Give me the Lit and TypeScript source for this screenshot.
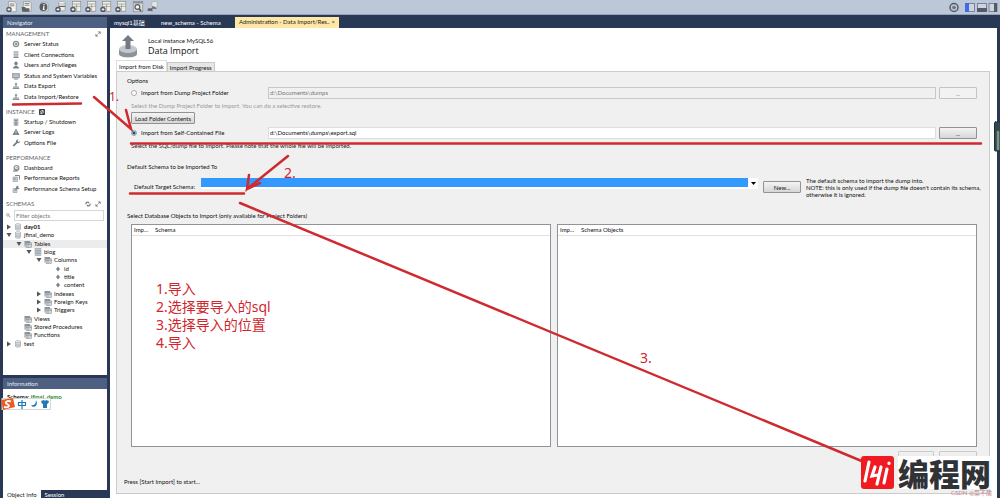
import { LitElement, html, css, svg, nothing } from "lit";
import { customElement } from "lit/decorators.js";

const icons: Record<string, unknown> = {
  status: svg`<circle cx="8" cy="8" r="6.5" fill="#8d9298"/><circle cx="8" cy="8" r="4" fill="#e4e6e8"/><path d="M7 5.5l4 2.5-4 2.5z" fill="#555b62"/>`,
  client: svg`<rect x="4" y="1" width="8" height="9" fill="#d5d8db" stroke="#8a8f95"/><path d="M5 4h6M5 7h6" stroke="#8a8f95"/><path d="M2 14l2-3h8l2 3z" fill="#8a8f95"/>`,
  user: svg`<ellipse cx="8" cy="5" rx="3.4" ry="4" fill="#7b8087"/><path d="M2 15c0-4 3-4 4-5h4c1 1 4 1 4 5z" fill="#7b8087"/>`,
  monitor: svg`<rect x="1" y="3" width="14" height="9" fill="#a4abb2" stroke="#7f858b"/><path d="M3 6h10M3 9h10" stroke="#e2e4e6"/><path d="M4 14h8" stroke="#7f858b" stroke-width="2"/>`,
  transfer: svg`<path d="M8 1l3 4H9v5H7V5H5z" fill="#7a8086"/><path d="M3 9h10l2 5H1z" fill="#8d9298"/><path d="M3 11h10" stroke="#d8dadc"/>`,
  power: svg`<rect x="4" y="2" width="8" height="13" fill="#c9cdd1" stroke="#7f858b"/><path d="M6 5h4M6 8h4" stroke="#6b7178" stroke-width="1.5"/><rect x="6" y="10" width="4" height="3" fill="#7f858b"/>`,
  logs: svg`<path d="M8 1l7 13H1z" fill="#777d84"/><path d="M8 5v5M8 11v2" stroke="#eee" stroke-width="1.5"/>`,
  wrench: svg`<path d="M1 13l7-7c-1-3 2-6 5-5l-2 3 2 2 3-2c0 4-3 5-5 4l-7 7z" fill="#777d84"/>`,
  gauge: svg`<circle cx="9" cy="8" r="6" fill="#8b9197"/><circle cx="9" cy="7" r="3.5" fill="#e1e3e5"/><path d="M9 8l2-3" stroke="#555"/><path d="M2 14h9" stroke="#777" stroke-width="2"/>`,
  report: svg`<path d="M2 6h9v9H2z" fill="#d0d3d6" stroke="#80868c"/><path d="M4 12V9M6 12V7M8 12V9" stroke="#70767c"/><path d="M6 3h9v8" fill="none" stroke="#80868c" stroke-width="2"/>`,
  setup: svg`<path d="M2 7h8v8H2z" fill="#d0d3d6" stroke="#80868c"/><path d="M4 13l4-8c0-3 3-4 5-3l-1 3 3 1c0 2-2 3-4 2" fill="#80868c"/>`,
  db: svg`<path d="M3 3v10c0 2 10 2 10 0V3z" fill="#dcdfe1" stroke="#90959a"/><ellipse cx="8" cy="3" rx="5" ry="1.8" fill="#f3f4f5" stroke="#90959a"/><path d="M3 7c0 2 10 2 10 0M3 10c0 2 10 2 10 0" fill="none" stroke="#90959a"/>`,
  folder: svg`<path d="M1 2h11v3h3v2H3v6H1z" fill="#8d959c"/><rect x="4" y="6" width="11" height="9" fill="#cfd5da" stroke="#7f868c"/><path d="M4 9h11M8 6v9" stroke="#7f868c"/>`,
  table: svg`<rect x="2" y="1" width="12" height="14" fill="#cdd6dd" stroke="#8b949b"/><path d="M2 5h12M2 8h12M2 11h12M6 1v14M10 1v14" stroke="#8b949b"/>`,
  column: svg`<path d="M8 3l4 5-4 5-4-5z" fill="#7d8489"/>`,
  search: svg`<circle cx="6" cy="6" r="4" fill="none" stroke="#777" stroke-width="2"/><path d="M9 9l5 5" stroke="#777" stroke-width="2"/>`,
  expand: svg`<path d="M9 2h5v5zM2 9v5h5zM12 4L4 12" stroke="#777" stroke-width="1.5" fill="#777"/>`,
  refresh: svg`<path d="M3 9a4 4 0 0 1 6-5M13 7a4 4 0 0 1-6 5" fill="none" stroke="#777" stroke-width="3"/><path d="M8 1l4 3-4 3zM8 9l-4 3 4 3z" fill="#777"/>`,
  badge: svg`<rect width="16" height="16" rx="2" fill="#3c4147"/><path d="M4 9a4 4 0 0 1 6-4M12 7a4 4 0 0 1-6 4" fill="none" stroke="#fff" stroke-width="2"/><path d="M9 2l4 3-4 3zM7 8l-4 3 4 3z" fill="#fff"/>`,
  sheetSql: svg`<path d="M4 1h10l3 3v14H4z" fill="#f3f2ee" stroke="#85847f"/><path d="M6 5h8M6 8h8" stroke="#777" stroke-width="1.5"/><circle cx="5" cy="14" r="4.5" fill="#555b5f"/><path d="M5 11.5v5M2.5 14h5" stroke="#fff" stroke-width="1.5"/>`,
  openSql: svg`<path d="M4 1h11l2 3v13H4z" fill="#f3f2ee" stroke="#85847f"/><path d="M6 4h8M6 7h8" stroke="#777" stroke-width="1.5"/><path d="M1 10h6l1 2h6v6H2z" fill="#5e6263"/>`,
  info: svg`<path d="M5 2h9l3 3v12H5z" fill="#d9dbdc" stroke="#94999d"/><circle cx="9" cy="10" r="6.5" fill="#555b5f"/><path d="M10 5v2M10 8l-1 6h2" stroke="#fff" stroke-width="2" fill="none"/>`,
  addDb: svg`<path d="M6 3v12c0 2 11 2 11 0V3z" fill="#e9e9e6" stroke="#86898b"/><ellipse cx="11.5" cy="3" rx="5.5" ry="2" fill="#fff" stroke="#86898b"/><path d="M6 9h11" stroke="#666" stroke-width="2"/><circle cx="5" cy="14" r="4.5" fill="#4c5256"/><path d="M5 11.5v5M2.5 14h5" stroke="#fff" stroke-width="1.5"/>`,
  addTable: svg`<rect x="4" y="1" width="14" height="16" fill="#f0efe9" stroke="#85847f"/><path d="M4 5h14M4 9h14M11 5v12" stroke="#85847f"/><circle cx="5" cy="14" r="4.5" fill="#4c5256"/><path d="M5 11.5v5M2.5 14h5" stroke="#fff" stroke-width="1.5"/>`,
  find: svg`<rect x="2" y="1" width="16" height="17" fill="#dedfdd" stroke="#777b7d"/><path d="M3 3h14" stroke="#777b7d" stroke-width="2"/><circle cx="9" cy="10" r="4" fill="#f4f4f4" stroke="#555b5f" stroke-width="2"/><path d="M12 13l3 4" stroke="#555b5f" stroke-width="3"/>`,
  link: svg`<path d="M8 1h9v9H8z" fill="#e6e7e5" stroke="#a0a4a7"/><path d="M1 12h8v-4l8 5H9v5z" fill="#5f6569"/><path d="M1 15h6" stroke="#5f6569" stroke-width="3"/>`,
};

const icon = (name: string, size = 16) =>
  html`<svg class="icon" viewBox="0 0 ${size} ${size}" aria-hidden="true">${icons[name]}</svg>`;

const sections = [
  { title: "MANAGEMENT", mark: "", tail: ["expand"], cls: "six", items: [
    ["status", "Server Status"], ["client", "Client Connections"], ["user", "Users and Privileges"],
    ["monitor", "Status and System Variables"], ["transfer", "Data Export"], ["transfer", "Data Import/Restore"]] },
  { title: "INSTANCE", mark: "badge", tail: [], cls: "three", items: [
    ["power", "Startup / Shutdown"], ["logs", "Server Logs"], ["wrench", "Options File"]] },
  { title: "PERFORMANCE", mark: "", tail: [], cls: "three", items: [
    ["gauge", "Dashboard"], ["report", "Performance Reports"], ["setup", "Performance Schema Setup"]] },
];

const tree: [number, string, string, string][] = [
  [0, "closed", "db", "day01"], [0, "open", "db", "jfinal_demo"], [1, "open", "folder", "Tables"],
  [2, "open", "table", "blog"], [3, "open", "folder", "Columns"], [4, "", "column", "id"],
  [4, "", "column", "title"], [4, "", "column", "content"], [3, "closed", "folder", "Indexes"],
  [3, "closed", "folder", "Foreign Keys"], [3, "closed", "folder", "Triggers"], [1, "", "folder", "Views"],
  [1, "", "folder", "Stored Procedures"], [1, "", "folder", "Functions"], [0, "closed", "db", "test"],
];

@customElement("wb-sidebar")
class WbSidebar extends LitElement {
  static styles = css`
    :host { display: flex; flex-direction: column; gap: 3px; color: #111; }
    * { box-sizing: border-box; }
    .panel { background: #fff; display: flex; flex-direction: column; }
    .nav { height: 358px; }
    .info { flex: 1; }
    .bar { flex: none; background: #4d6082; color: #e6ebf3; line-height: 11px; padding-left: 4px; }
    .icon { width: 8px; height: 8px; flex: none; }
    .head { display: flex; align-items: center; gap: 4px; height: 10px; padding: 0 6px 0 3px; color: #5d6168; }
    .head .grow { flex: 1; }
    .head .icon { width: 6px; height: 6px; }
    .section { padding-top: 1px; }
    .section + .section { padding-top: 5px; }
    .list { list-style: none; margin: 0; padding: 0 0 0 9px; display: grid; grid-auto-rows: 1fr; }
    .six { height: 63px; }
    .three { height: 31px; }
    .list a { display: flex; align-items: center; gap: 4px; height: 100%; color: inherit; text-decoration: none; white-space: nowrap; }
    .filter { display: flex; align-items: center; gap: 3px; height: 12px; padding: 0 3px; }
    .filter .icon { width: 5px; height: 5px; }
    .filter input { flex: 1; min-width: 0; height: 11px; border: 1px solid #d4d7da; padding: 0 1px; font: inherit; color: #777; background: #fff; }
    .filter input::placeholder { color: #777; opacity: 1; }
    .tree { list-style: none; margin: 2px 0 0; padding: 0; height: 125px; display: grid; grid-auto-rows: 1fr; }
    .row { display: flex; align-items: center; gap: 2px; padding-left: 3px; white-space: nowrap; }
    .l1 { padding-left: 13px; } .l2 { padding-left: 23px; } .l3 { padding-left: 33px; } .l4 { padding-left: 43px; }
    .row.sel { background: #ececec; }
    .row.bold { font-weight: 700; }
    .tw { width: 6px; height: 6px; flex: none; }
    .schema { padding: 4px 4px; font-weight: 700; line-height: 8px; }
    .schema span { color: #2c8a2c; }
    .tabs { display: flex; height: 8px; background: #293955; color: #fff; margin-top: auto; line-height: 8px; }
    button { border: 0; padding: 0 4px; font: inherit; background: none; color: inherit; line-height: 9px; }
    button.on { background: #fff; color: #222; }
  `;
  render() {
    return html`
      <nav class="panel nav">
        <div class="bar">Navigator</div>
        ${sections.map((s) => html`<section class="section">
          <div class="head">${s.title}${s.mark ? icon(s.mark) : nothing}<span class="grow"></span>${s.tail.map((t) => icon(t))}</div>
          <ul class="list ${s.cls}">${s.items.map(([i, t]) => html`<li><a href="#">${icon(i)}${t}</a></li>`)}</ul>
        </section>`)}
        <section class="section">
          <div class="head">SCHEMAS<span class="grow"></span>${icon("refresh")}${icon("expand")}</div>
          <label class="filter">${icon("search")}<input aria-label="Filter objects" placeholder="Filter objects" /></label>
          <ul class="tree">${tree.map(([lvl, st, ic, t], i) => html`<li class="row l${lvl} ${i === 2 ? "sel" : ""} ${i === 0 ? "bold" : ""}">
            <svg class="tw" viewBox="0 0 12 12">${st === "open" ? svg`<path d="M1 2h10l-5 8z" fill="#555"/>` : st === "closed" ? svg`<path d="M2 1v10l8-5z" fill="#555"/>` : nothing}</svg>
            ${icon(ic)}<span>${t}</span></li>`)}</ul>
        </section>
      </nav>
      <section class="panel info">
        <div class="bar">Information</div>
        <div class="schema">Schema: <span>jfinal_demo</span></div>
        <div class="tabs"><button class="on">Object Info</button><button>Session</button></div>
      </section>`;
  }
}

@customElement("wb-import")
class WbImport extends LitElement {
  static styles = css`
    :host { display: flex; flex-direction: column; background: #fff; color: #111; padding: 0 7px 4px 6px; }
    * { box-sizing: border-box; }
    .title { display: flex; align-items: center; gap: 10px; height: 33px; padding: 3px 2px 0; }
    .title svg { width: 20px; height: 24px; }
    .title p { margin: 0; line-height: 9px; }
    .title h1 { margin: 0; font: 9px/12px "Open Sans", "Noto Sans", sans-serif; color: #111; }
    .tabs { display: flex; align-items: flex-end; height: 10px; }
    .tabs button { font: inherit; color: inherit; line-height: 9px; height: 9px; padding: 0 2px; border: 1px solid #c8c8c8; border-bottom: 0; background: #e6e6e6; white-space: nowrap; }
    .tabs button.on { height: 11px; background: #fff; border-color: #ddd; }
    .page { flex: 1; background: #f0f0f0; border: 1px solid #ccc; padding: 5px 5px 0; display: flex; flex-direction: column; }
    fieldset { margin: 0; padding: 0 7px 0 9px; border: 0; min-width: 0; }
    legend { padding: 0; margin-left: -4px; line-height: 8px; height: 8px; white-space: nowrap; }
    .options { height: 86px; }
    .line { display: flex; align-items: center; height: 12px; gap: 3px; }
    .line label { display: flex; align-items: center; gap: 4px; width: 134px; white-space: nowrap; }
    .first { margin-top: 2px; }
    .second { margin-top: 3px; }
    input[type="radio"] { appearance: none; width: 6px; height: 6px; margin: 0; border: 1px solid #aaa; border-radius: 50%; background: #fff; }
    input[type="radio"]:checked { background: radial-gradient(#1b4a68 40%, #a9c6d6 60%); border-color: #8aa; }
    input[type="text"] { flex: 1; min-width: 0; height: 12px; border: 1px solid #ddd; padding: 0 0 1px 1px; font: inherit; background: #fff; color: #111; }
    input[type="text"]:disabled { background: #f0f0f0; color: #777; border-color: #c8c8c8; }
    .btn { font: inherit; color: #222; height: 12px; border: 1px solid #929292; border-radius: 1px; padding: 0; background: linear-gradient(#f4f4f4, #d6d6d6); line-height: 9px; flex: none; white-space: nowrap; }
    .btn:disabled { background: #f2f2f2; border-color: #c4c4c4; color: #777; }
    .w38 { width: 38px; }
    .load { width: 64px; display: block; margin-top: 1px; }
    .hint { margin: 0; line-height: 8px; height: 12px; padding-top: 3px; color: #999; }
    .dark { color: #222; }
    .target { height: 49px; }
    .pick { display: flex; align-items: center; gap: 5px; height: 26px; margin: 3px 0 0 3px; }
    .pick label { width: 62px; white-space: nowrap; }
    .combo { flex: 1; display: flex; position: relative; margin-bottom: 7px; }
    select { appearance: none; flex: 1; height: 11px; border: 0; border-radius: 0; font: inherit; background: linear-gradient(#3399ff, #3399ff) 0 0 / calc(100% - 10px) 9px no-repeat #fff; }
    .combo svg { position: absolute; right: 2px; top: 4px; width: 5px; height: 3px; }
    .note { width: 171px; margin: 0; line-height: 7px; white-space: nowrap; }
    .objects { flex: 1; display: flex; flex-direction: column; }
    .lists { display: grid; grid-template-columns: 1fr 1fr; gap: 6px; height: 223px; margin-top: 4px; }
    .list { border: 1px solid #8f949a; background: #fff; }
    table { width: 100%; border-collapse: collapse; }
    th { font-weight: 400; text-align: left; height: 10px; line-height: 8px; padding: 0 2px; border-bottom: 1px solid #e0e0e0; }
    th:first-child { width: 21px; }
    .acts { display: flex; justify-content: flex-end; gap: 5px; padding-top: 4px; opacity: 0.4; }
    .foot { margin: auto 0 7px 2px; line-height: 8px; }
  `;
  render() {
    return html`
      <header class="title">
        <svg viewBox="0 0 40 48"><path d="M2 30v10c0 9 36 9 36 0V30z" fill="#8d929a"/><ellipse cx="20" cy="30" rx="18" ry="8" fill="#c4c8cd"/><path d="M20 2l12 12h-7v16H15V14H8z" fill="#737a84"/></svg>
        <div><p>Local instance MySQL56</p><h1>Data Import</h1></div>
      </header>
      <div class="tabs" role="tablist"><button class="on" role="tab">Import from Disk</button><button role="tab">Import Progress</button></div>
      <main class="page">
        <fieldset class="options">
          <legend>Options</legend>
          <div class="line first"><label><input type="radio" name="src" />Import from Dump Project Folder</label>
            <input type="text" aria-label="Dump project folder" disabled value="d:\\Documents\\dumps" /><button class="btn w38" disabled>...</button></div>
          <p class="hint">Select the Dump Project Folder to import. You can do a selective restore.</p>
          <button class="btn load">Load Folder Contents</button>
          <div class="line second"><label><input type="radio" name="src" checked />Import from Self-Contained File</label>
            <input type="text" aria-label="Self-contained file" value="d:\\Documents\\dumps\\export.sql" /><button class="btn w38">...</button></div>
          <p class="hint dark">Select the SQL/dump file to import. Please note that the whole file will be imported.</p>
        </fieldset>
        <fieldset class="target">
          <legend>Default Schema to be Imported To</legend>
          <div class="pick"><label for="schema">Default Target Schema:</label>
            <span class="combo"><select id="schema"><option></option></select><svg viewBox="0 0 5 3"><path d="M0 0h5L2.5 3z"/></svg></span>
            <button class="btn w38">New...</button>
            <p class="note">The default schema to import the dump into.<br />NOTE: this is only used if the dump file doesn't contain its schema,<br />otherwise it is ignored.</p></div>
        </fieldset>
        <fieldset class="objects">
          <legend>Select Database Objects to Import (only available for Project Folders)</legend>
          <div class="lists">
            <div class="list"><table><tr><th>Imp...</th><th>Schema</th></tr></table></div>
            <div class="list"><table><tr><th>Imp...</th><th>Schema Objects</th></tr></table></div>
          </div>
          <div class="acts"><button class="btn">Select Tables</button><button class="btn w38">Unselect All</button></div>
        </fieldset>
        <p class="foot">Press [Start Import] to start...</p>
      </main>`;
  }
}

@customElement("app-root")
class AppRoot extends LitElement {
  static styles = css`
    :host { display: flex; flex-direction: column; position: relative; min-height: 100vh; overflow: hidden; background: #293955; font: 6px/8px Lato, "Noto Sans CJK SC", sans-serif; }
    * { box-sizing: border-box; }
    .toolbar { display: flex; align-items: center; gap: 3px; height: 15px; padding: 0 2px 0 6px; background: #bcc7d8; border-bottom: 1px solid #97a3b8; }
    .toolbar button { border: 0; padding: 0; background: none; width: 12px; height: 12px; display: flex; }
    .toolbar .gap { margin-left: 2px; }
    .icon { width: 12px; height: 12px; }
    .right { margin-left: auto; width: 50px; height: 11px; }
    .body { flex: 1; display: flex; gap: 3px; padding: 2px 3px 0; }
    wb-sidebar { width: 104px; flex: none; }
    .main { flex: 1; min-width: 0; display: flex; flex-direction: column; }
    wb-import { flex: 1; }
    .docs { display: flex; height: 11px; color: #fff; }
    .docs button { border: 0; font: inherit; color: inherit; background: none; padding: 0 4px; text-align: left; white-space: nowrap; line-height: 10px; }
    .d1 { width: 47px; } .d2 { width: 78px; }
    .docs .on { background: #ffe8a6; color: #222; width: 104px; display: flex; justify-content: space-between; }
    .over { position: absolute; left: 0; top: 0; width: 1000px; height: 498px; pointer-events: none; }
    .mark { position: absolute; color: #d0262d; font: 14px/18px "Noto Sans", "Noto Sans CJK SC", sans-serif; white-space: nowrap; }
    .m1 { left: 109px; top: 88px; font-size: 12px; } .m2 { left: 284px; top: 164px; } .m3 { left: 640px; top: 349px; }
    .steps { left: 156px; top: 280px; margin: 0; padding: 0; list-style: none; }
    .ime { position: absolute; left: 0; top: 398px; width: 52px; height: 13px; }
    .brand { position: absolute; right: 9px; bottom: 9px; display: flex; align-items: center; gap: 4px; height: 33px; }
    .brand svg { width: 33px; height: 33px; }
    .brand span { background: #fff; color: #303236; font: 900 31px/33px "Noto Sans CJK SC", sans-serif; }
    .credit { position: absolute; right: 8px; bottom: 1px; color: #b88; line-height: 8px; }
  `;
  render() {
    const tools = ["sheetSql", "openSql", "info", "addDb", "addTable", "addTable", "addTable", "addTable", "find", "link"];
    const gapBefore = [2, 3, 8];
    return html`
      <div class="toolbar">
        ${tools.map((t, i) => html`<button class=${gapBefore.includes(i) ? "gap" : ""} aria-label=${t}>${icon(t, 20)}</button>`)}
        <svg class="right" viewBox="0 0 50 11"><circle cx="6" cy="5.5" r="4" fill="none" stroke="#555b66" stroke-width="1.5"/><circle cx="6" cy="5.5" r="1.8" fill="#6c727c"/><g fill="#ccd4e2" stroke="#66708a" stroke-width=".8"><rect x="17.5" y="1.5" width="9" height="8"/><rect x="29.5" y="1.5" width="9" height="8"/><rect x="41" y="1.5" width="8" height="8"/></g><path d="M17 1h4v9h-4z" fill="#4169e1"/><path d="M29 6h10v4H29zM46 1h3v9h-3z" fill="#555b66"/></svg>
      </div>
      <div class="body">
        <wb-sidebar></wb-sidebar>
        <div class="main">
          <div class="docs"><button class="d1">mysql1基础</button><button class="d2">new_schema - Schema</button><button class="on"><span>Administration - Data Import/Res..</span><span>×</span></button></div>
          <wb-import></wb-import>
        </div>
      </div>
      <svg class="over" viewBox="0 0 1000 498" fill="none" stroke="#cf2a30" stroke-width="2.5" stroke-linecap="round">
        <path d="M13 104.500l68-1M94 97l37 32-5-19M131 143.500H981M288 156l-41 33 2-14M247 189l13-6M130 193.500H244M240 203L864 462"/>
        <rect x="994.500" y="122" width="6" height="29" rx="1" fill="#34464c" stroke="#20303a" stroke-width="1"/><path d="M998 132v17" stroke="#7d9384"/>
      </svg>
      <span class="mark m1">1.</span><span class="mark m2">2.</span><span class="mark m3">3.</span>
      <ul class="mark steps"><li>1.导入</li><li>2.选择要导入的sql</li><li>3.选择导入的位置</li><li>4.导入</li></ul>
      <svg class="ime" viewBox="0 0 52 13"><rect x="2" y=".5" width="48.500" height="11" fill="#fff" stroke="#d5d8db"/><path d="M1 2l12-2 2 9-12 3z" fill="#ed5a24"/><path d="M11 3.500c-4-1.500-7 1-4 2.500s3 4-3 3" fill="none" stroke="#fff" stroke-width="1.800"/><path d="M18.500 4.500h7v3h-7zM22 2v9" fill="none" stroke="#2478b8" stroke-width="1.200"/><path d="M36 2c0 4-2 6-5 5 2 4 8 1 5-5z" fill="#2478b8"/><path d="M41 3l3-1 1 1 1-1 3 1-1 3-1-.5V10h-4V5.500L42 6z" fill="#2478b8"/></svg>
      <span class="credit">CSDN @菜不酸</span>
      <div class="brand"><svg viewBox="0 0 33 33"><rect width="33" height="33" rx="3" fill="#f01b20"/><g stroke="#fff" stroke-width="3.200" fill="none" stroke-linecap="round"><path d="M8 6L4 25M14 11l-3 9 6-1M20 11l-4 17M26 13l-3 14M28 7v.5"/></g></svg><span>编程网</span></div>`;
  }
}
